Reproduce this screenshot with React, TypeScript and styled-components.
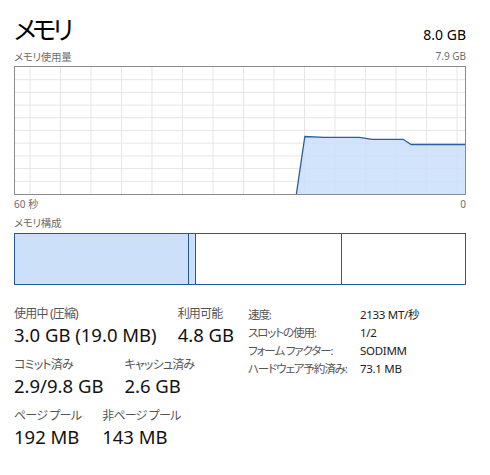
import React from "react";
import styled, { createGlobalStyle } from "styled-components";

const GlobalStyle = createGlobalStyle`
    html, body {
        margin: 0;
        padding: 0;
        background: #fff;
    }
    body {
        font-family: "Noto Sans", "Noto Sans CJK JP", sans-serif;
        color: #000;
    }
`;

const Page = styled.div`
    width: 490px;
    height: 475px;
    box-sizing: border-box;
    padding: 8px 24px 0 14px;
    display: flex;
    flex-direction: column;
    overflow: hidden;
`;

const Header = styled.div`
    display: flex;
    justify-content: space-between;
    align-items: flex-end;
    height: 38px;
`;

const Title = styled.div`
    font-family: "Noto Sans CJK JP", sans-serif;
    font-feature-settings: "palt";
    font-size: 25.5px;
    line-height: 36px;
    font-weight: 400;
    letter-spacing: -4px;
`;

const Total = styled.div`
    font-size: 14px;
    line-height: 20px;
    margin-bottom: 1px;
`;

const CaptionRow = styled.div<{ $h?: number }>`
    display: flex;
    justify-content: space-between;
    align-items: center;
    height: ${(p) => p.$h ?? 16}px;
    font-size: 10px;
    color: #6d6d6d;
`;

const CaptionJa = styled.span`
    font-family: "Noto Sans CJK JP", sans-serif;
    font-feature-settings: "palt";
    font-size: 10.5px;
    letter-spacing: -0.3px;
`;

const Chart = styled.div`
    height: 129px;
    border: 1px solid #8b8b8b;
    box-sizing: border-box;
    svg {
        display: block;
        width: 100%;
        height: 100%;
    }
`;

const Composition = styled.div`
    height: 52px;
    display: flex;
    border: 1px solid #22599a;
    box-sizing: border-box;
`;

const Segment = styled.div<{ $w: number; $fill?: boolean; $last?: boolean }>`
    flex: ${(p) => (p.$last ? "1 1 auto" : `0 0 ${p.$w}px`)};
    background: ${(p) => (p.$fill ? "#cce1f9" : "#fff")};
    border-right: ${(p) => (p.$last ? "none" : "1px solid #22599a")};
`;

const Stats = styled.div`
    display: flex;
    margin-top: 20px;
`;

const LeftStats = styled.div`
    width: 234px;
    display: flex;
    flex-direction: column;
`;

const StatRow = styled.div`
    display: flex;
    gap: 21px;
    height: 51px;
`;

const Stat = styled.div`
    display: flex;
    flex-direction: column;
`;

const StatLabel = styled.div`
    font-family: "Noto Sans", "Noto Sans CJK JP", sans-serif;
    font-feature-settings: "palt";
    font-size: 12px;
    line-height: 18px;
    color: #555;
    letter-spacing: -0.8px;
    white-space: nowrap;
`;

const StatValue = styled.div`
    font-size: 18.5px;
    line-height: 24px;
    color: #111;
    white-space: nowrap;
`;

const Details = styled.div`
    display: grid;
    grid-template-columns: 112px auto;
    grid-auto-rows: 18px;
    font-size: 11.5px;
    align-items: center;
`;

const DetailLabel = styled.div`
    font-family: "Noto Sans", "Noto Sans CJK JP", sans-serif;
    font-feature-settings: "palt";
    color: #555;
    letter-spacing: -1.1px;
    white-space: nowrap;
`;

const DetailValue = styled.div`
    color: #222;
    font-family: "Noto Sans", "Noto Sans CJK JP", sans-serif;
    font-feature-settings: "palt";
    letter-spacing: -0.3px;
`;

const W = 451;
const H = 127;
const vLines = Array.from({ length: 15 }, (_, i) => 15 + i * 30.57);
const hLines = Array.from({ length: 9 }, (_, i) => (i + 1) * 12.7);
const points: [number, number][] = [
    [282, 127],
    [290.5, 69.5],
    [310, 70.3],
    [345, 70.3],
    [358, 72.3],
    [389, 72.3],
    [397, 77.5],
    [451, 77.5],
];

const UsageChart = () => {
    const line = points.map(([x, y]) => `${x},${y}`).join(" ");
    const area = `${line} ${W},${H}`;
    return (
        <Chart>
            <svg viewBox={`0 0 ${W} ${H}`} preserveAspectRatio="none">
                {vLines.map((x) => (
                    <line key={"v" + x} x1={x} y1={0} x2={x} y2={H} stroke="#e6e6e6" strokeWidth={1} />
                ))}
                {hLines.map((y) => (
                    <line key={"h" + y} x1={0} y1={y} x2={W} y2={y} stroke="#e6e6e6" strokeWidth={1} />
                ))}
                <polygon points={area} fill="#c9dffa" fillOpacity={0.85} />
                <polyline points={line} fill="none" stroke="#2a5ea6" strokeWidth={1.3} />
            </svg>
        </Chart>
    );
};

const details = [
    ["速度:", "2133 MT/秒"],
    ["スロットの使用:", "1/2"],
    ["フォーム ファクター:", "SODIMM"],
    ["ハードウェア予約済み:", "73.1 MB"],
];

const stats = [
    [["使用中 (圧縮)", "3.0 GB (19.0 MB)"], ["利用可能", "4.8 GB"]],
    [["コミット済み", "2.9/9.8 GB"], ["キャッシュ済み", "2.6 GB"]],
    [["ページ プール", "192 MB"], ["非ページ プール", "143 MB"]],
];

export default function App() {
    return (
        <Page>
            <GlobalStyle />
            <Header>
                <Title>メモリ</Title>
                <Total>8.0 GB</Total>
            </Header>
            <CaptionRow $h={20}>
                <CaptionJa>メモリ使用量</CaptionJa>
                <span>7.9 GB</span>
            </CaptionRow>
            <UsageChart />
            <CaptionRow $h={17}>
                <span>
                    60 <CaptionJa>秒</CaptionJa>
                </span>
                <span>0</span>
            </CaptionRow>
            <CaptionRow $h={21}>
                <CaptionJa>メモリ構成</CaptionJa>
            </CaptionRow>
            <Composition>
                <Segment $w={173} $fill />
                <Segment $w={6} $fill />
                <Segment $w={145} />
                <Segment $w={0} $last />
            </Composition>
            <Stats>
                <LeftStats>
                    {stats.map((row, i) => (
                        <StatRow key={i}>
                            {row.map(([label, value]) => (
                                <Stat key={label}>
                                    <StatLabel>{label}</StatLabel>
                                    <StatValue>{value}</StatValue>
                                </Stat>
                            ))}
                        </StatRow>
                    ))}
                </LeftStats>
                <Details>
                    {details.map(([k, v]) => (
                        <React.Fragment key={k}>
                            <DetailLabel>{k}</DetailLabel>
                            <DetailValue>{v}</DetailValue>
                        </React.Fragment>
                    ))}
                </Details>
            </Stats>
        </Page>
    );
}
